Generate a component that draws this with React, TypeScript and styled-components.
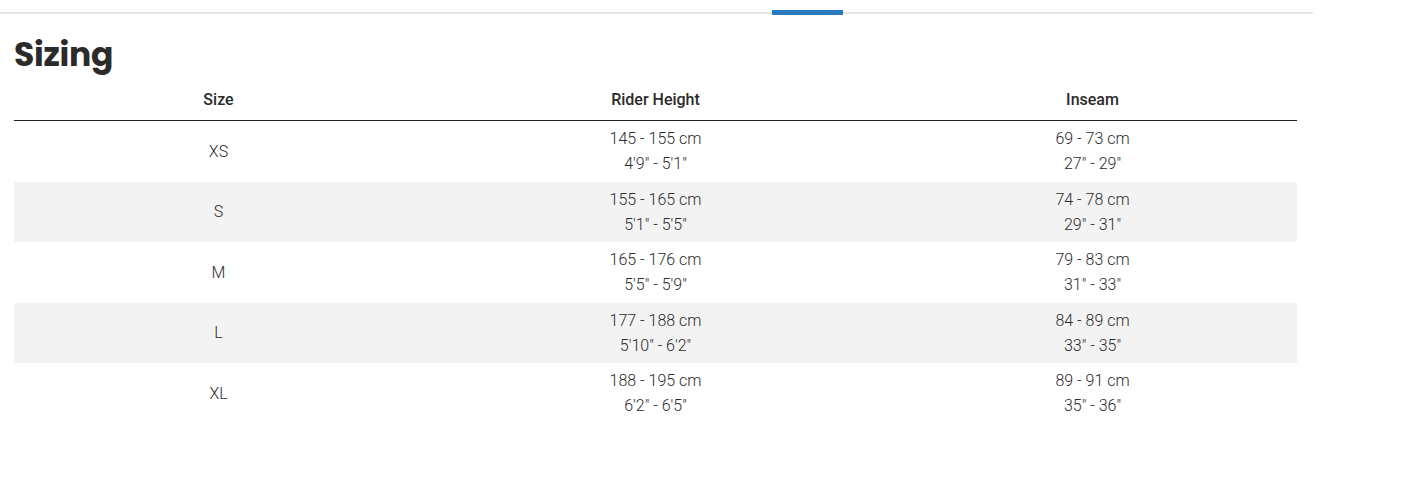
import React from 'react';
import styled, { createGlobalStyle } from 'styled-components';

const GlobalStyle = createGlobalStyle`
  body {
    margin: 0;
    background: #fff;
    font-family: Roboto, "Liberation Sans", sans-serif;
    color: #333;
  }
`;

const rows = [
  { size: 'XS', height: ['145 - 155 cm', `4'9" - 5'1"`], inseam: ['69 - 73 cm', `27" - 29"`] },
  { size: 'S', height: ['155 - 165 cm', `5'1" - 5'5"`], inseam: ['74 - 78 cm', `29" - 31"`] },
  { size: 'M', height: ['165 - 176 cm', `5'5" - 5'9"`], inseam: ['79 - 83 cm', `31" - 33"`] },
  { size: 'L', height: ['177 - 188 cm', `5'10" - 6'2"`], inseam: ['84 - 89 cm', `33" - 35"`] },
  { size: 'XL', height: ['188 - 195 cm', `6'2" - 6'5"`], inseam: ['89 - 91 cm', `35" - 36"`] },
];

export default function App() {
  return (
    <>
      <GlobalStyle />
      <$Page>
        <$TabTrack>
          <$TabIndicator />
        </$TabTrack>
        <$Section>
          <$Title>Sizing</$Title>
          <$Table>
            <colgroup>
              <$Col $width={409} />
              <$Col $width={465} />
              <$Col $width={409} />
            </colgroup>
            <thead>
              <tr>
                <$Th>Size</$Th>
                <$Th>Rider Height</$Th>
                <$Th>Inseam</$Th>
              </tr>
            </thead>
            <tbody>
              {rows.map((r, i) => (
                <$Row key={r.size} $striped={i % 2 === 1}>
                  <$Td>{r.size}</$Td>
                  <$Td>
                    {r.height[0]}
                    <br />
                    {r.height[1]}
                  </$Td>
                  <$Td>
                    {r.inseam[0]}
                    <br />
                    {r.inseam[1]}
                  </$Td>
                </$Row>
              ))}
            </tbody>
          </$Table>
        </$Section>
      </$Page>
    </>
  );
}

const $Page = styled.div`
  width: 1426px;
  min-height: 477px;
`;

const $TabTrack = styled.div`
  display: flex;
  width: 1313px;
  height: 2px;
  margin-top: 12px;
  background: #e6e6e6;
`;

const $TabIndicator = styled.div`
  width: 71px;
  height: 5px;
  margin: -2px 0 0 772px;
  background: #2a7abf;
`;

const $Section = styled.section`
  padding: 0 14px;
  width: 1283px;
`;

const $Title = styled.h2`
  margin: 19px 0 0;
  font-family: Poppins, Inter, "Liberation Sans", sans-serif;
  font-weight: 700;
  font-size: 33px;
  line-height: 44px;
  letter-spacing: -0.3px;
  color: #2b2b2b;
`;

const $Table = styled.table`
  width: 1283px;
  border-collapse: separate;
  border-spacing: 0;
  table-layout: fixed;
  margin-top: 6px;
`;

const $Col = styled.col<{ $width: number }>`
  width: ${(p) => p.$width}px;
`;

const $Th = styled.th`
  height: 33px;
  padding: 0 0 4px;
  font-size: 16px;
  font-weight: 500;
  color: #2b2b2b;
  text-align: center;
  vertical-align: middle;
  border-bottom: 1px solid #222;
  box-shadow: inset -1px 0 0 #fff;
  &:last-child {
    box-shadow: none;
  }
`;

const $Row = styled.tr<{ $striped: boolean }>`
  background: ${(p) => (p.$striped ? '#f3f3f3' : 'transparent')};
`;

const $Td = styled.td`
  height: 60.5px;
  padding: 0;
  font-size: 16px;
  font-weight: 300;
  line-height: 25px;
  color: #2b2b2b;
  text-align: center;
  vertical-align: middle;
`;
